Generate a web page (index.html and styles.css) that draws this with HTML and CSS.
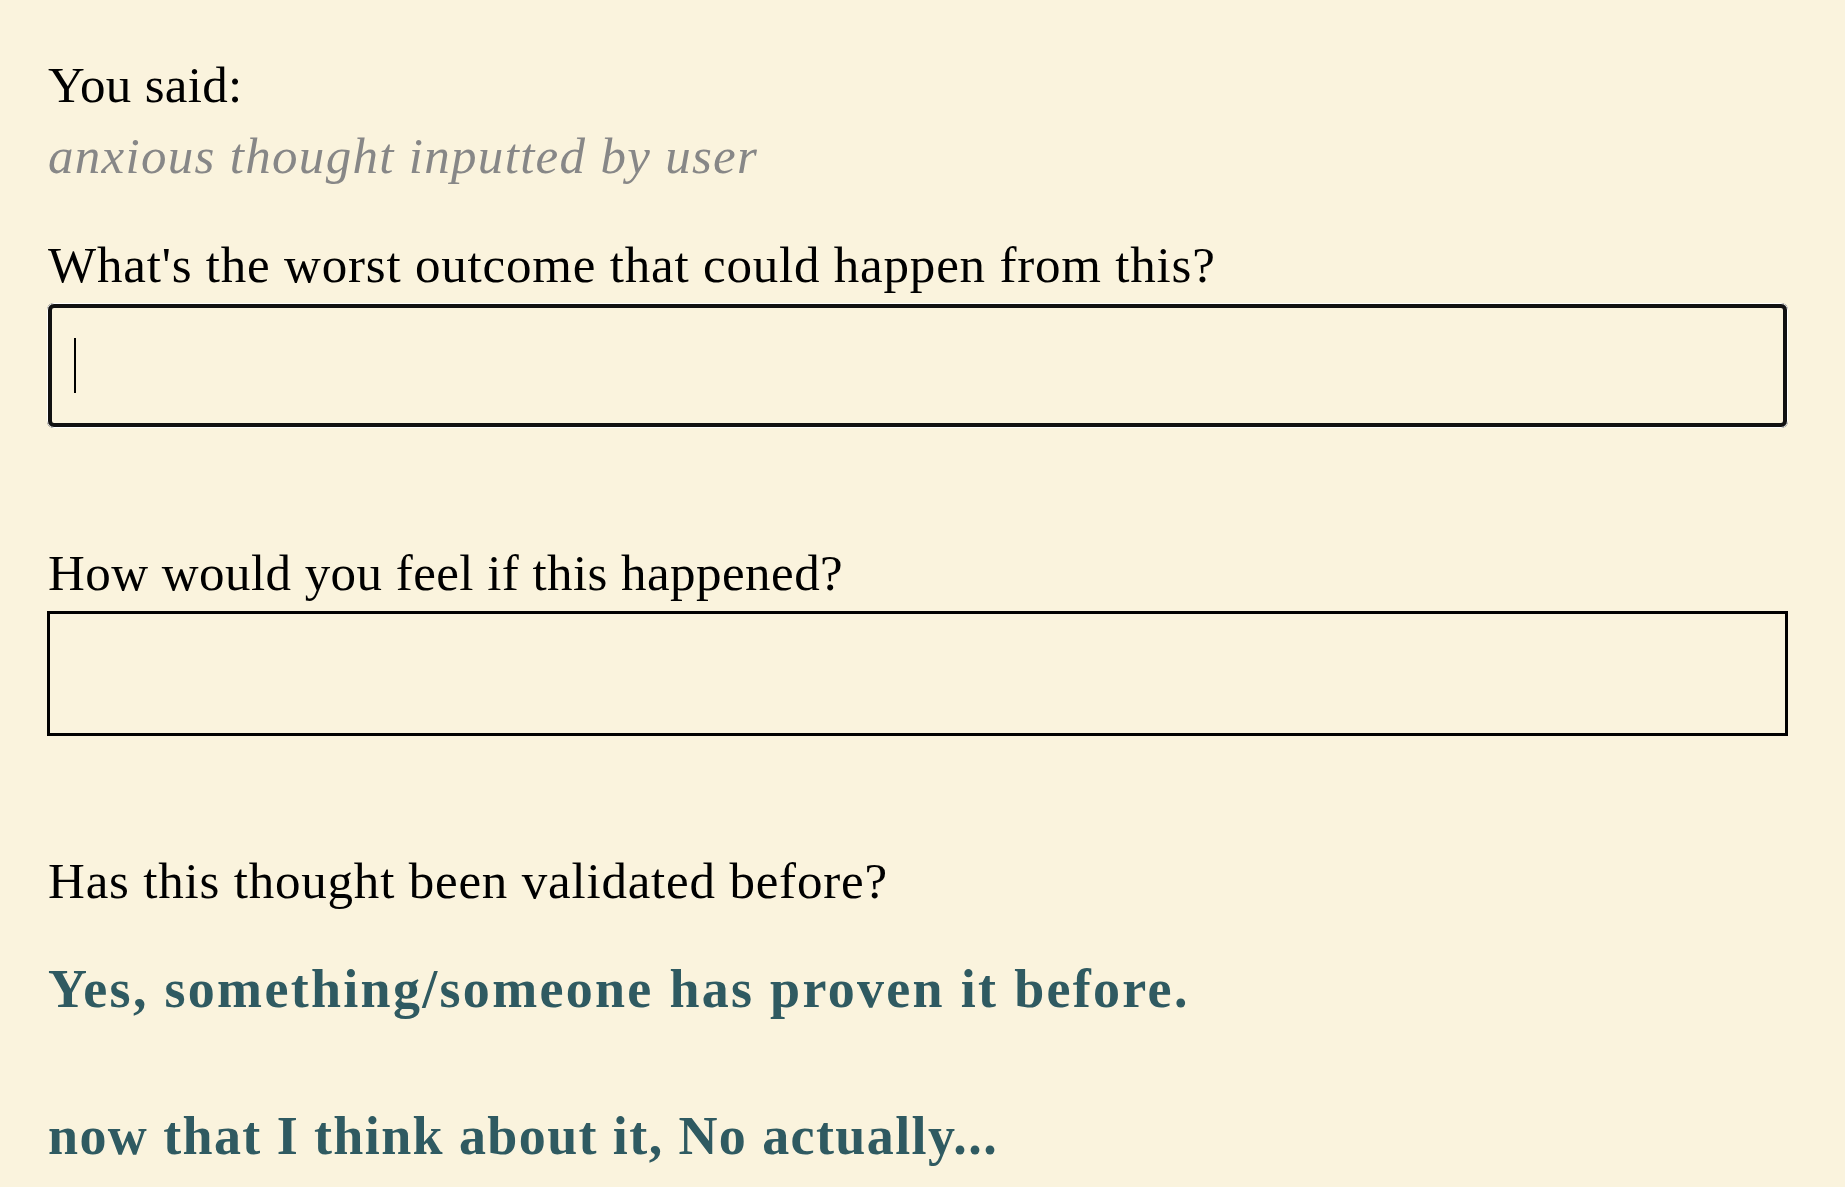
FILE: index.html
```html
<!DOCTYPE html>
<html lang="en">
<head>
<meta charset="utf-8">
<title>Anxious thought</title>
<link rel="stylesheet" href="styles.css">
</head>
<body>
<main class="page">
  <p class="said">You said:</p>
  <p class="thought">anxious thought inputted by user</p>

  <div class="question first">
    <label class="q-label worst" for="worst">What's the worst outcome that could happen from this?</label>
    <div class="field">
      <input class="q-input is-active" id="worst" type="text">
      <span class="caret"></span>
    </div>
  </div>

  <div class="question">
    <label class="q-label feel" for="feel">How would you feel if this happened?</label>
    <div class="field">
      <input class="q-input" id="feel" type="text">
    </div>
  </div>

  <p class="validated">Has this thought been validated before?</p>
  <div class="choices">
    <button class="choice yes" type="button">Yes, something/someone has proven it before.</button>
    <button class="choice no" type="button">now that I think about it, No actually...</button>
  </div>
</main>
</body>
</html>
```

FILE: styles.css
```css
html, body {
  margin: 0;
  padding: 0;
  background: #faf3dd;
}

body {
  font-family: "Liberation Serif", "Times New Roman", serif;
  font-size: 51px;
  line-height: 60px;
  color: #000;
}

.page {
  display: flex;
  flex-direction: column;
  padding: 55px 57px 40px 47px;
}

.said, .thought, .validated {
  margin: 0;
  padding-left: 1px;
}

.said {
  letter-spacing: 0.3px;
}

.thought {
  margin-top: 11px;
  font-style: italic;
  color: #878787;
  letter-spacing: 1.3px;
}

.question {
  display: flex;
  flex-direction: column;
  gap: 8px;
  margin-top: 115px;
}

.question.first {
  margin-top: 49px;
}

.q-label {
  display: block;
  padding-left: 1px;
  letter-spacing: 0.8px;
}

.q-label.feel {
  letter-spacing: 0.45px;
}

.field {
  position: relative;
}

.q-input {
  display: block;
  box-sizing: border-box;
  width: 100%;
  height: 125px;
  margin: 0;
  padding: 0 24px;
  border: 3px solid #000;
  border-radius: 0;
  background: transparent;
  font: inherit;
  color: #000;
  caret-color: transparent;
  outline: none;
}

.q-input.is-active {
  border: 5px solid #111;
  border-radius: 7px;
  outline: 1px solid #fff;
  outline-offset: -1px;
}

.caret {
  position: absolute;
  left: 27px;
  top: 35px;
  width: 2px;
  height: 55px;
  background: #000;
}

.validated {
  margin-top: 115px;
  letter-spacing: 0.8px;
}

.choices {
  display: flex;
  flex-direction: column;
  align-items: flex-start;
  gap: 87px;
  margin-top: 48px;
  padding-left: 1px;
}

.choice {
  margin: 0;
  padding: 0;
  border: none;
  background: none;
  font: inherit;
  font-size: 54px;
  font-weight: bold;
  line-height: 60px;
  color: #2f5a61;
  cursor: pointer;
  text-align: left;
}

.choice.yes {
  letter-spacing: 2.3px;
}

.choice.no {
  letter-spacing: 1.4px;
}
```
